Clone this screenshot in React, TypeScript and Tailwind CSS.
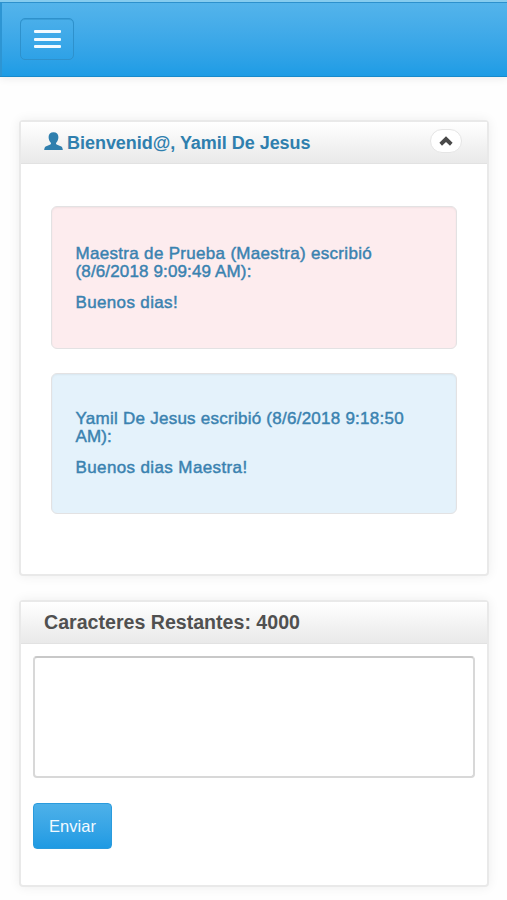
import type { ReactNode } from "react";

function UserIcon() {
  return (
    <svg width="19" height="19" viewBox="0 0 19 19" className="-mt-[2px] -ml-[0.5px] block" fill="#2f7fae">
      <path d="M9.5 0.3C6.5 0.3 4.6 2 4.6 4.9c0 2.5 0.9 4.4 2 5.7 0.6 0.8 0.5 1.5-0.2 1.9L1.7 14.5C0.7 15.1 0.3 16.4 0.2 18.1h18.6c-0.1-1.7-0.5-3-1.5-3.6l-4.7-2c-0.7-0.4-0.8-1.1-0.2-1.9 1.1-1.3 2-3.2 2-5.7C14.4 2 12.5 0.3 9.5 0.3z" />
    </svg>
  );
}

function ChevronUp() {
  return (
    <svg width="14" height="10" viewBox="0 0 14 10" className="-ml-[1px] block" fill="#494949">
      <path d="M7 0.2 13.6 6.8 11 9.7 7 5.9 3 9.7 0.4 6.8z" />
    </svg>
  );
}

type MessageProps = {
  className: string;
  children: ReactNode;
};

function Message({ className, children }: MessageProps) {
  return (
    <div
      className={`rounded-[6px] border border-[#e3e2e3] pl-[23.5px] text-[17px] leading-[18px] whitespace-nowrap text-[#3a82b0] shadow-[inset_0_1px_2px_rgba(0,0,0,0.05)] [-webkit-text-stroke:0.45px_#3a82b0] ${className}`}
    >
      {children}
    </div>
  );
}

type BoxProps = {
  className: string;
  header: ReactNode;
  children: ReactNode;
};

function Box({ className, header, children }: BoxProps) {
  return (
    <section
      className={`mx-[19px] mr-[18px] rounded-[4px] border-2 border-[#e9e9e9] bg-white shadow-[0_0_12px_rgba(0,0,0,0.07)] ${className}`}
    >
      <div className="flex h-[42px] items-center border-b border-[#e2e2e2] bg-linear-to-b from-white to-[#e9e9e9] pl-[23px] font-bold">
        {header}
      </div>
      {children}
    </section>
  );
}

export default function App() {
  return (
    <div className="h-[900px] overflow-hidden bg-[#fefefe] font-['Liberation_Sans',Arial,sans-serif]">
      {/* Navbar */}
      <nav className="h-[77px] border-t-2 border-b border-t-[#86ccef] border-b-[#178acb] bg-linear-to-b from-[#54b4eb] to-[#1d9ce5] pt-4 pl-5 shadow-[inset_0_1px_0_#2d91cd,inset_2px_0_0_#2d95d3,0_2px_8px_rgba(0,0,0,0.07)]">
        <button className="flex h-[42px] w-[54px] flex-col items-center justify-center gap-[4.5px] rounded-[5px] border border-[#2e91cc] shadow-[inset_0_1px_0_#3a9fd9]">
          <span className="h-[3px] w-[27px] rounded-[1px] bg-[#f3faff]" />
          <span className="h-[3px] w-[27px] rounded-[1px] bg-[#f3faff]" />
          <span className="h-[3px] w-[27px] rounded-[1px] bg-[#f3faff]" />
        </button>
      </nav>

      {/* Conversation */}
      <Box
        className="mt-[43px] h-[456px]"
        header={
          <>
            <UserIcon />
            <h2 className="mt-[2px] ml-[4.5px] text-[18px] tracking-[-0.03px] whitespace-nowrap text-[#2f7fae]">
              Bienvenid@, Yamil De Jesus
            </h2>
            <button className="-mt-[3px] mr-[25px] ml-auto flex h-6 w-8 items-center justify-center rounded-full border border-[#e5e5e5] bg-white">
              <ChevronUp />
            </button>
          </>
        }
      >
        <div className="flex flex-col gap-6 pt-[42px] pr-[30px] pl-[30px]">
          <Message className="h-[143px] bg-[#fdecee] pt-[38px]">
            <p className="tracking-[0.31px]">Maestra de Prueba (Maestra) escribió</p>
            <p className="tracking-[0.14px]">(8/6/2018 9:09:49 AM):</p>
            <p className="mt-[13px] tracking-[0.35px]">Buenos dias!</p>
          </Message>
          <Message className="h-[141px] bg-[#e4f2fb] pt-[36px]">
            <p className="tracking-[0.25px]">Yamil De Jesus escribió (8/6/2018 9:18:50</p>
            <p className="tracking-[0.1px]">AM):</p>
            <p className="mt-[13px] tracking-[0.38px]">Buenos dias Maestra!</p>
          </Message>
        </div>
      </Box>

      {/* Reply form */}
      <Box
        className="mt-6 h-[287px]"
        header={
          <h2 className="text-[19.6px] whitespace-nowrap text-[#505050]">
            Caracteres Restantes: 4000
          </h2>
        }
      >
        <div className="px-3 pt-3">
          <textarea className="block h-[122px] w-full resize-none rounded-[4px] border-2 border-[#d8d8d8] border-t-[#c8c8c8] bg-white outline-none" />
          <button className="mt-[25px] h-[46px] w-[79px] rounded-[4px] border border-[#2a9bdd] bg-linear-to-b from-[#4db1e9] to-[#1d9ae3] text-[16.5px] text-[#f1faff]">
            Enviar
          </button>
        </div>
      </Box>
    </div>
  );
}
